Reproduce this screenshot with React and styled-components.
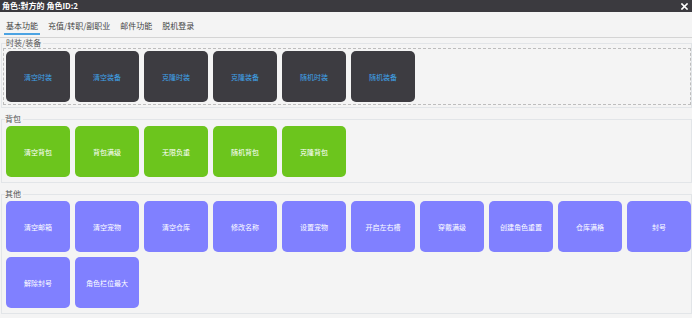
import React from "react";
import styled, { createGlobalStyle } from "styled-components";

const Global = createGlobalStyle`
  html, body { margin: 0; padding: 0; background: #f4f4f4; }
  body { font-family: "Noto Sans CJK SC", "Noto Sans", sans-serif; }
  * { box-sizing: border-box; }
`;

const Window = styled.div`
  width: 692px;
  height: 318px;
  background: #f4f4f4;
  overflow: hidden;
  display: flex;
  flex-direction: column;
`;

const TitleBar = styled.div`
  height: 12px;
  background: #3b3a3f;
  display: flex;
  align-items: center;
  justify-content: space-between;
  padding: 0 4px 0 2px;
`;

const Title = styled.span`
  color: #fff;
  font-weight: bold;
  font-size: 8px;
  line-height: 12px;
`;

const CloseIcon = () => (
  <svg width="7" height="7" viewBox="0 0 7 7">
    <path d="M1 1 L6 6 M6 1 L1 6" stroke="#fff" strokeWidth="1.6" strokeLinecap="square" />
  </svg>
);

const TabBar = styled.div`
  height: 26px;
  display: flex;
  align-items: flex-end;
  gap: 6px;
  padding: 0 4px;
  border-bottom: 1px solid #d4d4d4;
`;

const Tab = styled.div`
  font-size: 8px;
  line-height: 12px;
  color: #444;
  padding: 0 2px 1px;
  margin-bottom: 2px;
  border-bottom: 2px solid ${(p) => (p.$active ? "#4ba3e3" : "transparent")};
  white-space: nowrap;
`;

const Section = styled.fieldset`
  margin: ${(p) => (p.$first ? "0" : "6px")} 0 0 1px;
  padding: ${(p) => (p.$first ? "0 0 2px 1px" : "2px 0 5px 4px")};
  border: 1px solid #e2e5e8;
  min-width: 0;
`;

const Legend = styled.legend`
  font-size: 8px;
  line-height: 10px;
  color: #555;
  padding: 0 2px 0 0;
  margin-left: ${(p) => (p.$first ? "3px" : "-1px")};
`;

const DashedBox = styled.div`
  border: 1px dashed #bdbdbd;
  padding: 2px;
`;

const Grid = styled.div`
  display: flex;
  flex-wrap: wrap;
  gap: 5px;
`;

const palette = {
  dark: { bg: "#3d3c41", fg: "#3fa3ea" },
  green: { bg: "#6cc51d", fg: "#ffffff" },
  purple: { bg: "#8080ff", fg: "#ffffff" },
};

const Button = styled.button`
  width: 64px;
  height: 51px;
  border: none;
  border-radius: 5px;
  background: ${(p) => palette[p.$tone].bg};
  color: ${(p) => palette[p.$tone].fg};
  font-family: inherit;
  font-size: 7px;
  line-height: 10px;
  padding: 0;
  display: flex;
  align-items: center;
  justify-content: center;
  white-space: nowrap;
  cursor: pointer;
`;

const fashion = ["清空时装", "清空装备", "克隆时装", "克隆装备", "随机时装", "随机装备"];
const bag = ["清空背包", "背包满级", "无限负重", "随机背包", "克隆背包"];
const other = [
  "清空邮箱", "清空宠物", "清空仓库", "修改名称", "设置宠物",
  "开启左右槽", "穿戴满级", "创建角色重置", "仓库满格", "封号",
  "解除封号", "角色栏位最大",
];

export default function App() {
  return (
    <Window>
      <Global />
      <TitleBar>
        <Title>角色:對方的 角色ID:2</Title>
        <CloseIcon />
      </TitleBar>
      <TabBar>
        <Tab $active>基本功能</Tab>
        <Tab>充值/转职/副职业</Tab>
        <Tab>邮件功能</Tab>
        <Tab>脱机登录</Tab>
      </TabBar>
      <Section $first>
        <Legend $first>时装/装备</Legend>
        <DashedBox>
          <Grid>
            {fashion.map((t) => (
              <Button key={t} $tone="dark">{t}</Button>
            ))}
          </Grid>
        </DashedBox>
      </Section>
      <Section>
        <Legend>背包</Legend>
        <Grid>
          {bag.map((t) => (
            <Button key={t} $tone="green">{t}</Button>
          ))}
        </Grid>
      </Section>
      <Section>
        <Legend>其他</Legend>
        <Grid>
          {other.map((t) => (
            <Button key={t} $tone="purple">{t}</Button>
          ))}
        </Grid>
      </Section>
    </Window>
  );
}
